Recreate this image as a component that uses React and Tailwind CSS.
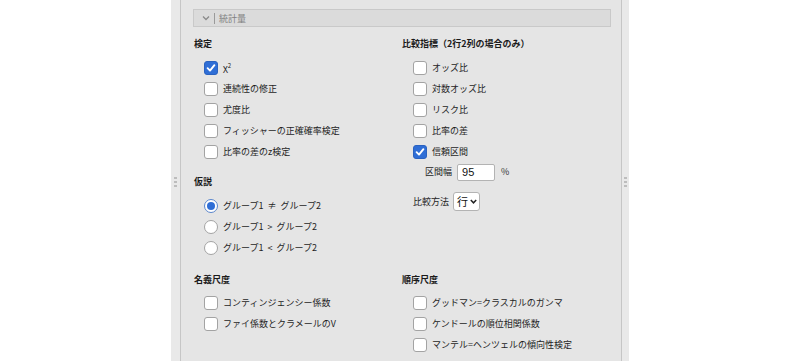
import React from 'react';

const font = { fontFamily: '"Noto Sans CJK JP", "Noto Sans", sans-serif' };

const Check = ({ checked, label }) => (
    <div className="flex items-center h-[21px]">
        <span
            className={
                checked
                    ? 'w-[14px] h-[14px] rounded-[3px] bg-[#2f6ed6] border border-[#2a62c0] flex items-center justify-center'
                    : 'w-[14px] h-[14px] rounded-[3px] bg-white border border-[#a3a3a3]'
            }
        >
            {checked && (
                <svg width="10" height="10" viewBox="0 0 10 10">
                    <path d="M1.6 5.2 L4 7.6 L8.4 2.2" fill="none" stroke="white" strokeWidth="1.9" strokeLinecap="round" strokeLinejoin="round" />
                </svg>
            )}
        </span>
        <span className="ml-[5px] text-[9px] text-[#1e1e1e] leading-none">{label}</span>
    </div>
);

const Radio = ({ checked, label }) => (
    <div className="flex items-center h-[21px]">
        <span
            className={
                checked
                    ? 'w-[14px] h-[14px] rounded-full bg-white border border-[#5a86cc] flex items-center justify-center'
                    : 'w-[14px] h-[14px] rounded-full bg-white border border-[#a3a3a3]'
            }
        >
            {checked && <span className="w-[8px] h-[8px] rounded-full bg-[#2f6ed6]" />}
        </span>
        <span className="ml-[5px] text-[9px] text-[#1e1e1e] leading-none whitespace-pre">{label}</span>
    </div>
);

const Heading = ({ children, className = '' }) => (
    <div className={'h-[16px] flex items-center text-[9px] font-bold text-[#1a1a1a] ' + className}>{children}</div>
);

const Grip = () => (
    <div className="flex flex-col gap-[2px]">
        <span className="w-[3px] h-[2px] bg-[#bdbdbd]" />
        <span className="w-[3px] h-[2px] bg-[#bdbdbd]" />
        <span className="w-[3px] h-[2px] bg-[#bdbdbd]" />
    </div>
);

export default function App() {
    return (
        <div className="w-[800px] h-[361px] bg-white flex justify-center overflow-hidden" style={font}>
            <div className="w-[458px] h-full flex">
                <div className="w-[9px] bg-[#e9e9e9] flex items-center justify-center pt-[2px]">
                    <Grip />
                </div>
                <div className="w-[442px] bg-[#e5e5e5] border-x border-[#c6c6c6] pl-[12px] pr-[10px]">
                    <div className="mt-[9px] h-[18px] bg-[#dbdbdb] border border-[#c9c9c9] flex items-center pl-[8px]">
                        <svg width="8" height="6" viewBox="0 0 8 6">
                            <path d="M1 1.5 L4 4.5 L7 1.5" fill="none" stroke="#8a8a8a" strokeWidth="1.3" />
                        </svg>
                        <span className="ml-[4px] w-px h-[11px] bg-[#9a9a9a]" />
                        <span className="ml-[4px] text-[9px] text-[#808080] leading-none">統計量</span>
                    </div>

                    <div className="grid grid-cols-[208px_1fr] pl-px">
                        <div>
                            <Heading className="mt-[9px] mb-[5px]">検定</Heading>
                            <div className="pl-[10px]">
                                <Check checked label={<span>χ<sup className="text-[6px]">2</sup></span>} />
                                <Check label="連続性の修正" />
                                <Check label="尤度比" />
                                <Check label="フィッシャーの正確確率検定" />
                                <Check label="比率の差のz検定" />
                            </div>
                            <Heading className="mt-[12px] mb-[5px]">仮説</Heading>
                            <div className="pl-[10px]">
                                <Radio checked label={'グループ1  ≠  グループ2'} />
                                <Radio label={'グループ1  >  グループ2'} />
                                <Radio label={'グループ1  <  グループ2'} />
                            </div>
                        </div>
                        <div>
                            <Heading className="mt-[9px] mb-[5px]">比較指標（2行2列の場合のみ）</Heading>
                            <div className="pl-[11px]">
                                <Check label="オッズ比" />
                                <Check label="対数オッズ比" />
                                <Check label="リスク比" />
                                <Check label="比率の差" />
                                <Check checked label="信頼区間" />
                                <div className="flex items-center h-[18px] mt-px pl-[12px]">
                                    <span className="text-[9px] text-[#1e1e1e]">区間幅</span>
                                    <div className="ml-[5px] w-[38px] h-[17px] bg-white border border-[#b3b3b3] rounded-[2px] flex items-center pl-[4px] text-[11px] text-[#111]" style={{ fontFamily: '"Liberation Sans", sans-serif' }}>
                                        95
                                    </div>
                                    <span className="ml-[6px] text-[9px] text-[#333]">%</span>
                                </div>
                                <div className="flex items-center h-[19px] mt-[11px]">
                                    <span className="text-[9px] text-[#1e1e1e]">比較方法</span>
                                    <div className="ml-[4px] w-[27px] h-[19px] bg-white border border-[#b3b3b3] rounded-[3px] flex items-center pl-[3px]">
                                        <span className="text-[11px] text-[#111] leading-none">行</span>
                                        <svg className="ml-[2px]" width="7" height="5" viewBox="0 0 7 5">
                                            <path d="M0.8 1 L3.5 3.8 L6.2 1" fill="none" stroke="#222" strokeWidth="1.5" />
                                        </svg>
                                    </div>
                                </div>
                            </div>
                        </div>

                        <div>
                            <Heading className="mt-[14px] mb-[4px]">名義尺度</Heading>
                            <div className="pl-[10px]">
                                <Check label="コンティンジェンシー係数" />
                                <Check label="ファイ係数とクラメールのV" />
                            </div>
                        </div>
                        <div>
                            <Heading className="mt-[14px] mb-[4px]">順序尺度</Heading>
                            <div className="pl-[11px]">
                                <Check label="グッドマン=クラスカルのガンマ" />
                                <Check label="ケンドールの順位相関係数" />
                                <Check label="マンテル=ヘンツェルの傾向性検定" />
                            </div>
                        </div>
                    </div>
                </div>
                <div className="w-[7px] bg-[#e9e9e9] flex items-center justify-center pt-[2px]">
                    <Grip />
                </div>
            </div>
        </div>
    );
}
